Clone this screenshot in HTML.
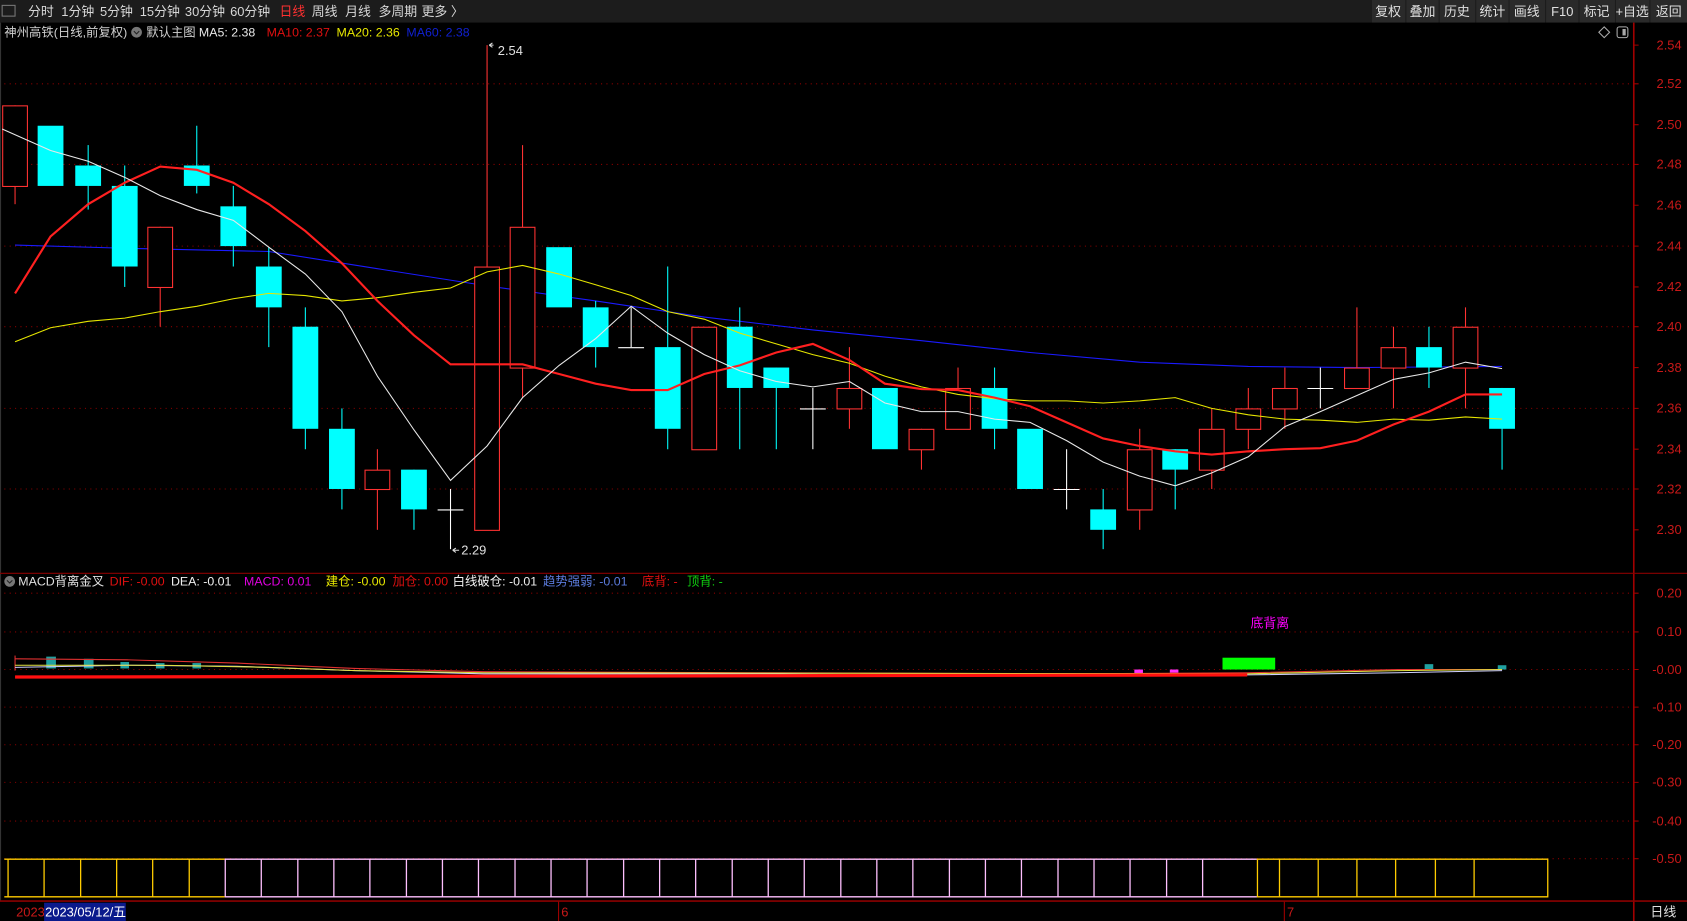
<!DOCTYPE html>
<html><head><meta charset="utf-8"><style>
html,body{margin:0;padding:0;background:#000;width:1687px;height:921px;overflow:hidden}
svg text{font-family:"Liberation Sans","Noto Sans CJK SC",sans-serif;font-size:12px}
svg text.s{font-size:11.5px}
</style></head><body>
<svg width="1687" height="921" viewBox="0 0 1569 857" preserveAspectRatio="none" xmlns="http://www.w3.org/2000/svg">
<rect width="1569" height="857" fill="#000"/>
<rect x="0" y="0" width="1569" height="21" fill="#1c1c1c"/>
<rect x="2" y="5" width="12" height="10" fill="none" stroke="#777" stroke-width="1"/>
<g fill="#d8d8d8">
<text x="26" y="15">分时</text><text x="57" y="15">1分钟</text><text x="93" y="15">5分钟</text><text x="130" y="15">15分钟</text><text x="172" y="15">30分钟</text><text x="214" y="15">60分钟</text>
<text x="260" y="15" fill="#ff3030">日线</text><text x="290" y="15">周线</text><text x="321" y="15">月线</text><text x="352" y="15">多周期</text><text x="392" y="15">更多 〉</text>
</g>
<g fill="#2a2a2a">
<rect x="1276" y="0" width="31" height="21"/><rect x="1308" y="0" width="30" height="21"/><rect x="1339" y="0" width="33" height="21"/><rect x="1373" y="0" width="30" height="21"/><rect x="1404" y="0" width="33" height="21"/><rect x="1438" y="0" width="30" height="21"/><rect x="1469" y="0" width="33" height="21"/><rect x="1503" y="0" width="31" height="21"/><rect x="1535" y="0" width="34" height="21"/>
</g>
<g fill="#e0e0e0" text-anchor="middle">
<text x="1291" y="15">复权</text><text x="1323" y="15">叠加</text><text x="1355" y="15">历史</text><text x="1388" y="15">统计</text><text x="1420" y="15">画线</text><text x="1453" y="15">F10</text><text x="1485" y="15">标记</text><text x="1518" y="15">+自选</text><text x="1552" y="15">返回</text>
</g>
<text class="s" x="4" y="34" fill="#d0d0d0">神州高铁(日线,前复权)</text>
<circle cx="127" cy="30" r="5" fill="#777"/><path d="M124.5 29l2.5 2.5 2.5-2.5" stroke="#222" fill="none"/>
<text class="s" x="136" y="34" fill="#d0d0d0">默认主图</text>
<text class="s" x="185" y="34" fill="#e8e8e8">MA5: 2.38</text>
<text class="s" x="248" y="34" fill="#e01010">MA10: 2.37</text>
<text class="s" x="313" y="34" fill="#e8e800">MA20: 2.36</text>
<text class="s" x="378" y="34" fill="#1020d0">MA60: 2.38</text>
<path d="M1492 25l5 5-5 5-5-5z" fill="none" stroke="#aaa"/>
<rect x="1504" y="25" width="10" height="10" rx="2" fill="none" stroke="#aaa"/><rect x="1509" y="27" width="3" height="6" fill="#aaa"/>
<line x1="0.5" y1="21" x2="0.5" y2="838" stroke="#333"/>
<line x1="1519.5" y1="21" x2="1519.5" y2="857" stroke="#a00000" stroke-width="1.5"/>
<line x1="0" y1="533.5" x2="1569" y2="533.5" stroke="#8a0000"/>
<line x1="0" y1="838.5" x2="1569" y2="838.5" stroke="#8a0000" stroke-width="1.5"/>
<g stroke="#8a0000" stroke-dasharray="1 4">
<line x1="4" y1="78" x2="1519" y2="78"/><line x1="4" y1="153" x2="1519" y2="153"/><line x1="4" y1="229" x2="1519" y2="229"/><line x1="4" y1="304" x2="1519" y2="304"/><line x1="4" y1="380" x2="1519" y2="380"/><line x1="4" y1="455" x2="1519" y2="455"/>
<line x1="4" y1="552" x2="1519" y2="552"/><line x1="4" y1="588" x2="1519" y2="588"/><line x1="4" y1="623" x2="1519" y2="623"/><line x1="4" y1="658" x2="1519" y2="658"/><line x1="4" y1="693" x2="1519" y2="693"/><line x1="4" y1="728" x2="1519" y2="728"/><line x1="4" y1="764" x2="1519" y2="764"/><line x1="4" y1="799" x2="1519" y2="799"/>
</g>
<g fill="#c81818" text-anchor="end">
<text x="1564" y="46">2.54</text><text x="1564" y="82">2.52</text><text x="1564" y="120">2.50</text><text x="1564" y="157">2.48</text><text x="1564" y="195">2.46</text><text x="1564" y="233">2.44</text><text x="1564" y="271">2.42</text><text x="1564" y="308">2.40</text><text x="1564" y="346">2.38</text><text x="1564" y="384">2.36</text><text x="1564" y="422">2.34</text><text x="1564" y="459">2.32</text><text x="1564" y="497">2.30</text>
<text x="1564" y="556">0.20</text><text x="1564" y="592">0.10</text><text x="1564" y="627">-0.00</text><text x="1564" y="662">-0.10</text><text x="1564" y="697">-0.20</text><text x="1564" y="732">-0.30</text><text x="1564" y="768">-0.40</text><text x="1564" y="803">-0.50</text>
</g>
<g stroke="#a00000">
<path d="M1519 42h5M1519 78h5M1519 116h5M1519 153h5M1519 191h5M1519 229h5M1519 267h5M1519 304h5M1519 342h5M1519 380h5M1519 418h5M1519 455h5M1519 493h5M1519 552h5M1519 588h5M1519 623h5M1519 658h5M1519 693h5M1519 728h5M1519 764h5M1519 799h5"/>
</g>
<polyline fill="none" stroke="#1a1aff" stroke-width="1" points="14,228 116,231 250,234 351,250 453,266 554,280 655,295 756,307 857,317 958,328 1060,337 1161,341 1262,342 1397,341"/>
<g stroke-width="1">
<line x1="14" y1="98" x2="14" y2="190" stroke="#ff3232"/><rect x="2.5" y="98.5" width="23" height="75" fill="#000" stroke="#ff3232"/>
<rect x="35" y="117" width="24" height="56" fill="#00ffff"/>
<line x1="82" y1="135" x2="82" y2="195" stroke="#00ffff"/><rect x="70" y="154" width="24" height="19" fill="#00ffff"/>
<line x1="116" y1="154" x2="116" y2="267" stroke="#00ffff"/><rect x="104" y="173" width="24" height="75" fill="#00ffff"/>
<line x1="149" y1="211" x2="149" y2="304" stroke="#ff3232"/><rect x="137.5" y="211.5" width="23" height="56" fill="#000" stroke="#ff3232"/>
<line x1="183" y1="117" x2="183" y2="180" stroke="#00ffff"/><rect x="171" y="154" width="24" height="19" fill="#00ffff"/>
<line x1="217" y1="173" x2="217" y2="248" stroke="#00ffff"/><rect x="205" y="192" width="24" height="37" fill="#00ffff"/>
<line x1="250" y1="230" x2="250" y2="323" stroke="#00ffff"/><rect x="238" y="248" width="24" height="38" fill="#00ffff"/>
<line x1="284" y1="286" x2="284" y2="418" stroke="#00ffff"/><rect x="272" y="304" width="24" height="95" fill="#00ffff"/>
<line x1="318" y1="380" x2="318" y2="474" stroke="#00ffff"/><rect x="306" y="399" width="24" height="56" fill="#00ffff"/>
<line x1="351" y1="418" x2="351" y2="493" stroke="#ff3232"/><rect x="339.5" y="437.5" width="23" height="18" fill="#000" stroke="#ff3232"/>
<line x1="385" y1="437" x2="385" y2="493" stroke="#00ffff"/><rect x="373" y="437" width="24" height="37" fill="#00ffff"/>
<line x1="419" y1="455" x2="419" y2="511" stroke="#fff"/><line x1="407" y1="474.5" x2="431" y2="474.5" stroke="#fff"/>
<line x1="453" y1="42" x2="453" y2="493" stroke="#ff3232"/><rect x="441.5" y="248.5" width="23" height="245" fill="#000" stroke="#ff3232"/>
<line x1="486" y1="135" x2="486" y2="370" stroke="#ff3232"/><rect x="474.5" y="211.5" width="23" height="131" fill="#000" stroke="#ff3232"/>
<rect x="508" y="230" width="24" height="56" fill="#00ffff"/>
<line x1="554" y1="280" x2="554" y2="342" stroke="#00ffff"/><rect x="542" y="286" width="24" height="37" fill="#00ffff"/>
<line x1="587" y1="286" x2="587" y2="323" stroke="#fff"/><line x1="575" y1="323.5" x2="599" y2="323.5" stroke="#fff"/>
<line x1="621" y1="248" x2="621" y2="418" stroke="#00ffff"/><rect x="609" y="323" width="24" height="76" fill="#00ffff"/>
<rect x="643.5" y="304.5" width="23" height="114" fill="#000" stroke="#ff3232"/>
<line x1="688" y1="286" x2="688" y2="418" stroke="#00ffff"/><rect x="676" y="304" width="24" height="57" fill="#00ffff"/>
<line x1="722" y1="342" x2="722" y2="418" stroke="#00ffff"/><rect x="710" y="342" width="24" height="19" fill="#00ffff"/>
<line x1="756" y1="361" x2="756" y2="418" stroke="#fff"/><line x1="744" y1="380.5" x2="768" y2="380.5" stroke="#fff"/>
<line x1="790" y1="323" x2="790" y2="399" stroke="#ff3232"/><rect x="778.5" y="361.5" width="23" height="19" fill="#000" stroke="#ff3232"/>
<rect x="811" y="361" width="24" height="57" fill="#00ffff"/>
<line x1="857" y1="399" x2="857" y2="437" stroke="#ff3232"/><rect x="845.5" y="399.5" width="23" height="19" fill="#000" stroke="#ff3232"/>
<line x1="891" y1="342" x2="891" y2="399" stroke="#ff3232"/><rect x="879.5" y="361.5" width="23" height="38" fill="#000" stroke="#ff3232"/>
<line x1="925" y1="342" x2="925" y2="418" stroke="#00ffff"/><rect x="913" y="361" width="24" height="38" fill="#00ffff"/>
<rect x="946" y="399" width="24" height="56" fill="#00ffff"/>
<line x1="992" y1="418" x2="992" y2="474" stroke="#fff"/><line x1="980" y1="455.5" x2="1004" y2="455.5" stroke="#fff"/>
<line x1="1026" y1="455" x2="1026" y2="511" stroke="#00ffff"/><rect x="1014" y="474" width="24" height="19" fill="#00ffff"/>
<line x1="1060" y1="399" x2="1060" y2="493" stroke="#ff3232"/><rect x="1048.5" y="418.5" width="23" height="56" fill="#000" stroke="#ff3232"/>
<line x1="1093" y1="418" x2="1093" y2="474" stroke="#00ffff"/><rect x="1081" y="418" width="24" height="19" fill="#00ffff"/>
<line x1="1127" y1="380" x2="1127" y2="455" stroke="#ff3232"/><rect x="1115.5" y="399.5" width="23" height="38" fill="#000" stroke="#ff3232"/>
<line x1="1161" y1="361" x2="1161" y2="418" stroke="#ff3232"/><rect x="1149.5" y="380.5" width="23" height="19" fill="#000" stroke="#ff3232"/>
<line x1="1195" y1="342" x2="1195" y2="399" stroke="#ff3232"/><rect x="1183.5" y="361.5" width="23" height="19" fill="#000" stroke="#ff3232"/>
<line x1="1228" y1="342" x2="1228" y2="380" stroke="#fff"/><line x1="1216" y1="361.5" x2="1240" y2="361.5" stroke="#fff"/>
<line x1="1262" y1="286" x2="1262" y2="361" stroke="#ff3232"/><rect x="1250.5" y="342.5" width="23" height="19" fill="#000" stroke="#ff3232"/>
<line x1="1296" y1="304" x2="1296" y2="380" stroke="#ff3232"/><rect x="1284.5" y="323.5" width="23" height="19" fill="#000" stroke="#ff3232"/>
<line x1="1329" y1="304" x2="1329" y2="361" stroke="#00ffff"/><rect x="1317" y="323" width="24" height="19" fill="#00ffff"/>
<line x1="1363" y1="286" x2="1363" y2="380" stroke="#ff3232"/><rect x="1351.5" y="304.5" width="23" height="38" fill="#000" stroke="#ff3232"/>
<line x1="1397" y1="361" x2="1397" y2="437" stroke="#00ffff"/><rect x="1385" y="361" width="24" height="38" fill="#00ffff"/>
</g>
<polyline fill="none" stroke="#e6e600" stroke-width="1" points="14,318 47,305 82,299 116,296 149,290 183,285 217,278 250,273 284,275 318,280 351,277 385,272 419,268 453,253 486,247 520,255 554,265 587,275 621,290 655,297 688,310 722,320 756,330 790,338 823,350 857,360 891,367 925,371 958,373 992,373 1026,375 1060,373 1093,370 1127,380 1161,386 1195,390 1228,391 1262,393 1296,390 1329,391 1363,388 1397,390"/>
<polyline fill="none" stroke="#ff2020" stroke-width="2" points="14,273 47,220 82,190 116,170 149,155 183,158 217,170 250,190 284,215 318,245 351,280 385,312 419,339 453,339 486,339 520,348 554,357 587,363 621,363 655,348 688,340 722,328 756,320 790,335 823,357 857,362 891,363 925,370 958,378 992,393 1026,408 1060,415 1093,420 1127,423 1161,420 1195,418 1228,417 1262,410 1296,395 1329,383 1363,367 1397,367"/>
<polyline fill="none" stroke="#e8e8e8" stroke-width="1" points="2,120 47,140 82,150 116,165 149,182 183,195 217,205 250,230 284,255 318,290 351,350 385,400 419,447 453,415 486,370 520,340 554,315 587,285 621,310 655,330 688,345 722,355 756,360 790,355 823,375 857,383 891,383 925,390 958,393 992,410 1026,430 1060,443 1093,452 1127,440 1161,425 1195,397 1228,383 1262,368 1296,353 1329,347 1363,337 1397,343"/>
<path d="M455 42h4M455 42l3-2M455 42l3 2" stroke="#ddd" fill="none"/><text x="463" y="51" fill="#e0e0e0">2.54</text>
<path d="M421 512h6M421 512l3-2M421 512l3 2" stroke="#ddd" fill="none"/><text x="429" y="516" fill="#e0e0e0">2.29</text>
<circle cx="9" cy="541" r="5" fill="#777"/><path d="M6.5 540l2.5 2.5 2.5-2.5" stroke="#222" fill="none"/>
<text class="s" x="17" y="545" fill="#e0e0e0">MACD背离金叉</text>
<text class="s" x="102" y="545" fill="#e01010">DIF: -0.00</text>
<text class="s" x="159" y="545" fill="#f0f0f0">DEA: -0.01</text>
<text class="s" x="227" y="545" fill="#e000e0">MACD: 0.01</text>
<text class="s" x="303" y="545" fill="#e8e800">建仓: -0.00</text>
<text class="s" x="365" y="545" fill="#e01010">加仓: 0.00</text>
<text class="s" x="421" y="545" fill="#f0f0f0">白线破仓: -0.01</text>
<text class="s" x="505" y="545" fill="#5b7bdc">趋势强弱: -0.01</text>
<text class="s" x="597" y="545" fill="#e01010">底背: -</text>
<text class="s" x="639" y="545" fill="#10d010">顶背: -</text>
<text x="1163" y="584" fill="#ff00ff">底背离</text>
<g>
<line x1="14" y1="610" x2="14" y2="624" stroke="#e03030"/>
<rect x="43" y="611" width="9" height="11" fill="#20a0a0"/><rect x="78" y="613" width="9" height="9" fill="#20a0a0"/>
<rect x="112" y="616" width="8" height="6" fill="#20a0a0"/><rect x="145" y="617" width="8" height="5" fill="#20a0a0"/><rect x="179" y="617" width="8" height="5" fill="#20a0a0"/>
<rect x="1137" y="612" width="49" height="11" fill="#00ff00"/>
<rect x="1325" y="618" width="8" height="5" fill="#20a0a0"/><rect x="1393" y="619" width="8" height="4" fill="#20a0a0"/>
<rect x="1055" y="623" width="8" height="4" fill="#ff30ff"/><rect x="1088" y="623" width="8" height="3" fill="#ff30ff"/>
<polyline fill="none" stroke="#e03030" points="14,613 120,614 220,617 330,622 450,625 700,626 1000,627 1160,626 1300,623 1397,623"/>
<polyline fill="none" stroke="#d0d0ff" points="14,621 120,619 220,620 330,624 450,627 700,627 1000,629 1160,628 1300,626 1397,624"/>
<polyline fill="none" stroke="#e0e040" points="14,619 150,619 250,621 330,624 450,626 1160,627 1300,624 1397,623"/>
<line x1="14" y1="630" x2="1160" y2="628" stroke="#ff1010" stroke-width="3"/>
</g>
<g fill="none" stroke-width="1.2">
<path stroke="#ffcc00" d="M4 799.5H209M4 834.5H209M7.5 799v36M41 799v36M75 799v36M108.5 799v36M142 799v36M176 799v36"/>
<path stroke="#ffc0ff" d="M209 799.5H1169M209 834.5H1169M209.5 799v36M243 799v36M277 799v36M310.5 799v36M344 799v36M378 799v36M411.5 799v36M445 799v36M479 799v36M512.5 799v36M546 799v36M580 799v36M613.5 799v36M647 799v36M681 799v36M714.5 799v36M748 799v36M782 799v36M815.5 799v36M849 799v36M883 799v36M916.5 799v36M950 799v36M984 799v36M1017.5 799v36M1051 799v36M1085 799v36M1118.5 799v36"/>
<path stroke="#ffcc00" d="M1169 799.5H1440M1169 834.5H1440M1169.5 799v36M1190 799v36M1226 799v36M1262 799v36M1298 799v36M1335 799v36M1371 799v36M1439.5 799v36"/>
</g>
<text x="15" y="853" fill="#c81818">2023</text>
<rect x="41" y="840" width="76" height="17" fill="#0a1a8c"/>
<text x="42" y="853" fill="#fff">2023/05/12/五</text>
<line x1="519.5" y1="839" x2="519.5" y2="857" stroke="#a00000"/><text x="522" y="853" fill="#c81818">6</text>
<line x1="1194.5" y1="839" x2="1194.5" y2="857" stroke="#a00000"/><text x="1197" y="853" fill="#c81818">7</text>
<text x="1535" y="853" fill="#e0e0e0">日线</text>
</svg>
</body></html>
